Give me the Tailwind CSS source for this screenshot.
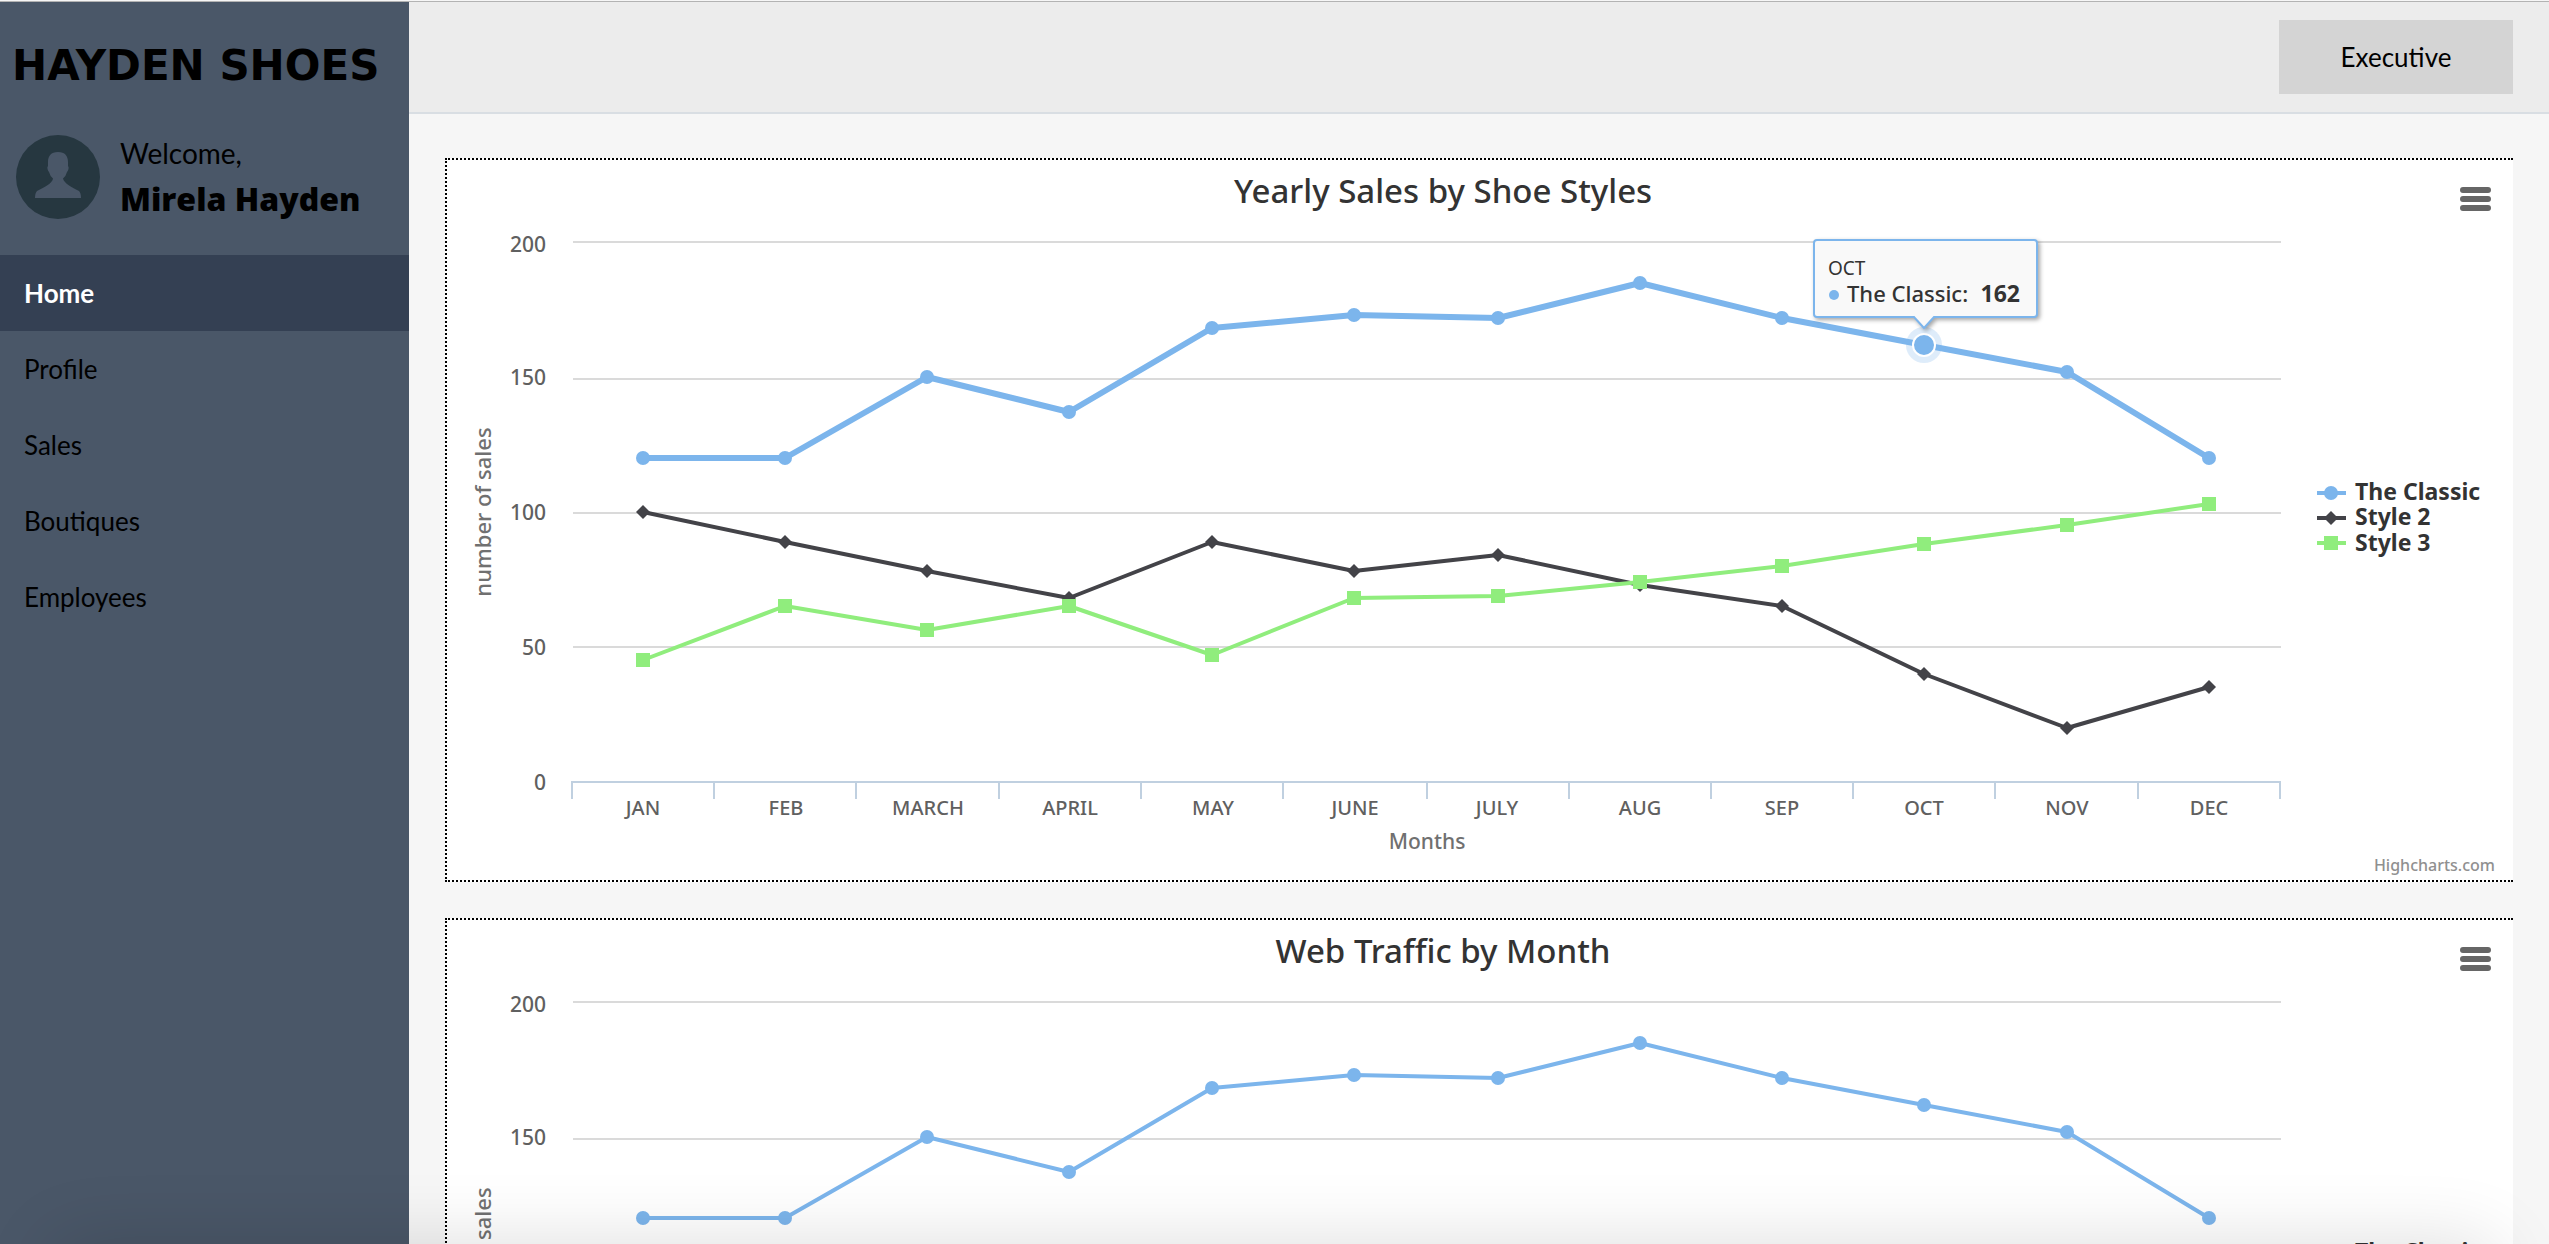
<!DOCTYPE html>
<html lang="en">
<head>
<meta charset="utf-8">
<meta name="viewport" content="width=device-width, initial-scale=1">
<title>Hayden Shoes</title>
<script src="https://cdn.jsdelivr.net/npm/@tailwindcss/browser@4"></script>
</head>
<body class="flex h-screen flex-col overflow-hidden border-t border-[#f6f6f6] bg-[#f6f6f6] font-['Lato',sans-serif] text-black">

<div class="flex min-h-0 flex-1 border-t border-[#b3b3b3]">
  <aside class="w-[409px] shrink-0 bg-[#4a5768]">
    <h1 class="px-3 pt-9 font-['DejaVu_Sans',sans-serif] text-[42px] leading-[56px] font-bold whitespace-nowrap">HAYDEN SHOES</h1>
    <div class="flex items-center gap-5 px-4 pt-9 pb-8">
      <svg class="size-[84px] shrink-0" viewBox="0 0 84 84" role="img" aria-label="User avatar">
        <circle cx="42" cy="42" r="42" fill="#263740"/>
        <path d="M42 17C35 17 32 21 32 27V31Q31 32 31.500 34Q32 36 33 37Q34 41 37 43.500C36.500 48 29 52 21 56Q19 58 19 63H65Q65 58 63 56C55 52 48 48 47 43.500Q50 41 51 37Q52 36 52.500 34Q53 32 52 31V27C52 21 49 17 42 17Z" fill="#4a5768"/>
      </svg>
      <p class="text-[28px] leading-[46px] whitespace-nowrap">Welcome,<br><strong class="font-['Open_Sans',sans-serif] text-[32px] font-extrabold">Mirela Hayden</strong></p>
    </div>
    <nav class="text-[26px] leading-[76px]">
      <a href="#home" class="block bg-[#344053] px-6 font-bold text-white" aria-current="page">Home</a>
      <a href="#profile" class="block px-6">Profile</a>
      <a href="#sales" class="block px-6">Sales</a>
      <a href="#boutiques" class="block px-6">Boutiques</a>
      <a href="#employees" class="block px-6">Employees</a>
    </nav>
  </aside>

  <div class="flex min-w-0 flex-1 flex-col">
    <header class="flex shrink-0 justify-end border-b-2 border-[#d9dee3] bg-[#ececec] px-9 py-[18px]">
      <button type="button" class="h-[74px] w-[234px] bg-[#d4d4d4] text-[26px]">Executive</button>
    </header>

    <main class="flex min-h-0 flex-1 flex-col gap-9 overflow-y-auto px-9 pt-11 [scrollbar-width:none]">

      <section class="relative shrink-0 border-y-2 border-l-2 border-dotted border-black bg-white">
        <svg class="block w-full font-['Noto_Sans',sans-serif] font-medium" viewBox="0 0 2066 720" role="img" aria-label="Yearly Sales by Shoe Styles">
          <defs>
            <marker id="dot" markerUnits="userSpaceOnUse" markerWidth="16" markerHeight="16" refX="8" refY="8"><circle cx="8" cy="8" r="7" fill="#7cb5ec"/></marker>
            <marker id="diamond" markerUnits="userSpaceOnUse" markerWidth="16" markerHeight="16" refX="8" refY="8"><path d="M8 1L15 8L8 15L1 8Z" fill="#434348"/></marker>
            <marker id="square" markerUnits="userSpaceOnUse" markerWidth="16" markerHeight="16" refX="8" refY="8"><path d="M1 1H15V15H1Z" fill="#90ed7d"/></marker>
            <path id="grid" d="M126 82H1834M126 219H1834M126 353H1834M126 487H1834" stroke="#dadada" stroke-width="2"/>
            <path id="axis" d="M124 622H1834M125 622V639M267 622V639M409 622V639M552 622V639M694 622V639M836 622V639M980 622V639M1122 622V639M1264 622V639M1406 622V639M1548 622V639M1691 622V639M1833 622V639" stroke="#c0d0e0" stroke-width="2"/>
            <polyline id="classic" points="196,298 338,298 480,217 622,252 765,168 907,155 1051,158 1193,123 1335,158 1477,185 1620,212 1762,298" fill="none" stroke="#7cb5ec" stroke-linejoin="round" marker-start="url(#dot)" marker-mid="url(#dot)" marker-end="url(#dot)"/>
            <polyline id="style2" points="196,352 338,382 480,411 622,438 765,382 907,411 1051,395 1193,425 1335,446 1477,514 1620,568 1762,527" fill="none" stroke="#434348" stroke-width="4" stroke-linejoin="round" marker-start="url(#diamond)" marker-mid="url(#diamond)" marker-end="url(#diamond)"/>
            <polyline id="style3" points="196,500 338,446 480,470 622,446 765,495 907,438 1051,436 1193,422 1335,406 1477,384 1620,365 1762,344" fill="none" stroke="#90ed7d" stroke-width="4" stroke-linejoin="round" marker-start="url(#square)" marker-mid="url(#square)" marker-end="url(#square)"/>
            <g id="keys" stroke-width="4">
              <path d="M1870 333H1899" stroke="#7cb5ec"/><circle cx="1884" cy="333" r="7" fill="#7cb5ec"/>
              <path d="M1870 358H1899" stroke="#434348"/><path d="M1884 351L1891 358L1884 365L1877 358Z" fill="#434348" stroke="none"/>
              <path d="M1870 383H1899" stroke="#90ed7d"/><path d="M1877 376H1891V390H1877Z" fill="#90ed7d" stroke="none"/>
            </g>
          </defs>
          <text x="996" y="43" text-anchor="middle" font-size="33" fill="#333">Yearly Sales by Shoe Styles</text>
          <use href="#grid"/>
          <use href="#axis"/>
          <g font-size="21" fill="#606060" text-anchor="end">
            <text x="99" y="92">200</text>
            <text x="99" y="225">150</text>
            <text x="99" y="360">100</text>
            <text x="99" y="495">50</text>
            <text x="99" y="630">0</text>
          </g>
          <text transform="translate(44 352) rotate(-90)" text-anchor="middle" font-size="22" fill="#707070">number of sales</text>
          <g font-size="20" fill="#606060" text-anchor="middle">
            <text x="196" y="655">JAN</text>
            <text x="339" y="655">FEB</text>
            <text x="481" y="655">MARCH</text>
            <text x="623" y="655">APRIL</text>
            <text x="766" y="655">MAY</text>
            <text x="908" y="655">JUNE</text>
            <text x="1050" y="655">JULY</text>
            <text x="1193" y="655">AUG</text>
            <text x="1335" y="655">SEP</text>
            <text x="1477" y="655">OCT</text>
            <text x="1620" y="655">NOV</text>
            <text x="1762" y="655">DEC</text>
          </g>
          <text x="980" y="689" text-anchor="middle" font-size="21" fill="#707070">Months</text>
          <circle cx="1477" cy="185" r="18" fill="#7cb5ec" fill-opacity="0.25"/>
          <use href="#classic" stroke-width="6"/>
          <use href="#style2"/>
          <use href="#style3"/>
          <circle cx="1477" cy="185" r="11" fill="#7cb5ec" stroke="#fff" stroke-width="2"/>
          <use href="#keys"/>
          <g font-size="23" font-weight="700" fill="#333">
            <text x="1908" y="340">The Classic</text>
            <text x="1908" y="365">Style 2</text>
            <text x="1908" y="391">Style 3</text>
          </g>
          <a href="#highcharts"><text x="2048" y="711" text-anchor="end" font-size="16" fill="#909090">Highcharts.com</text></a>
          <g class="drop-shadow-[2px_2px_2px_rgba(0,0,0,0.35)]">
            <path d="M1370 80H1587Q1590 80 1590 83V154Q1590 157 1587 157H1487L1477 168L1467 157H1370Q1367 157 1367 154V83Q1367 80 1370 80Z" fill="#f9f9f9" stroke="#7cb5ec" stroke-width="2"/>
          </g>
          <circle cx="1387" cy="135" r="5" fill="#7cb5ec"/>
          <g fill="#333">
            <text x="1381" y="115" font-size="19" font-weight="400">OCT</text>
            <text x="1400" y="142" font-size="22">The Classic:</text>
            <text x="1573" y="142" font-size="23" font-weight="700" text-anchor="end">162</text>
          </g>
        </svg>
        <button type="button" aria-label="Chart menu" class="absolute top-[19px] right-[13px] p-1">
          <svg class="block h-[32px] w-[40px]" viewBox="0 0 40 32" fill="none" stroke="#666" stroke-width="6" stroke-linecap="round"><path d="M7 7H32M7 16H32M7 25H32"/></svg>
        </button>
      </section>

      <section class="relative shrink-0 border-y-2 border-l-2 border-dotted border-black bg-white">
        <svg class="block w-full font-['Noto_Sans',sans-serif] font-medium" viewBox="0 0 2066 720" role="img" aria-label="Web Traffic by Month">
          <text x="996" y="43" text-anchor="middle" font-size="33" fill="#333">Web Traffic by Month</text>
          <use href="#grid"/>
          <use href="#axis"/>
          <g font-size="21" fill="#606060" text-anchor="end">
            <text x="99" y="92">200</text>
            <text x="99" y="225">150</text>
            <text x="99" y="360">100</text>
            <text x="99" y="495">50</text>
            <text x="99" y="630">0</text>
          </g>
          <text transform="translate(44 352) rotate(-90)" text-anchor="middle" font-size="22" fill="#707070">number of sales</text>
          <use href="#classic" stroke-width="4"/>
          <use href="#style2"/>
          <use href="#style3"/>
          <use href="#keys"/>
          <g font-size="23" font-weight="700" fill="#333">
            <text x="1908" y="340">The Classic</text>
            <text x="1908" y="365">Style 2</text>
            <text x="1908" y="391">Style 3</text>
          </g>
        </svg>
        <button type="button" aria-label="Chart menu" class="absolute top-[19px] right-[13px] p-1">
          <svg class="block h-[32px] w-[40px]" viewBox="0 0 40 32" fill="none" stroke="#666" stroke-width="6" stroke-linecap="round"><path d="M7 7H32M7 16H32M7 25H32"/></svg>
        </button>
      </section>
    </main>
  </div>
</div>

<!-- soft shade along the lower window edge -->
<div class="pointer-events-none fixed top-full right-14 left-14 h-20 shadow-[0_0_76px_rgba(0,0,0,0.14)]"></div>
</body>
</html>
